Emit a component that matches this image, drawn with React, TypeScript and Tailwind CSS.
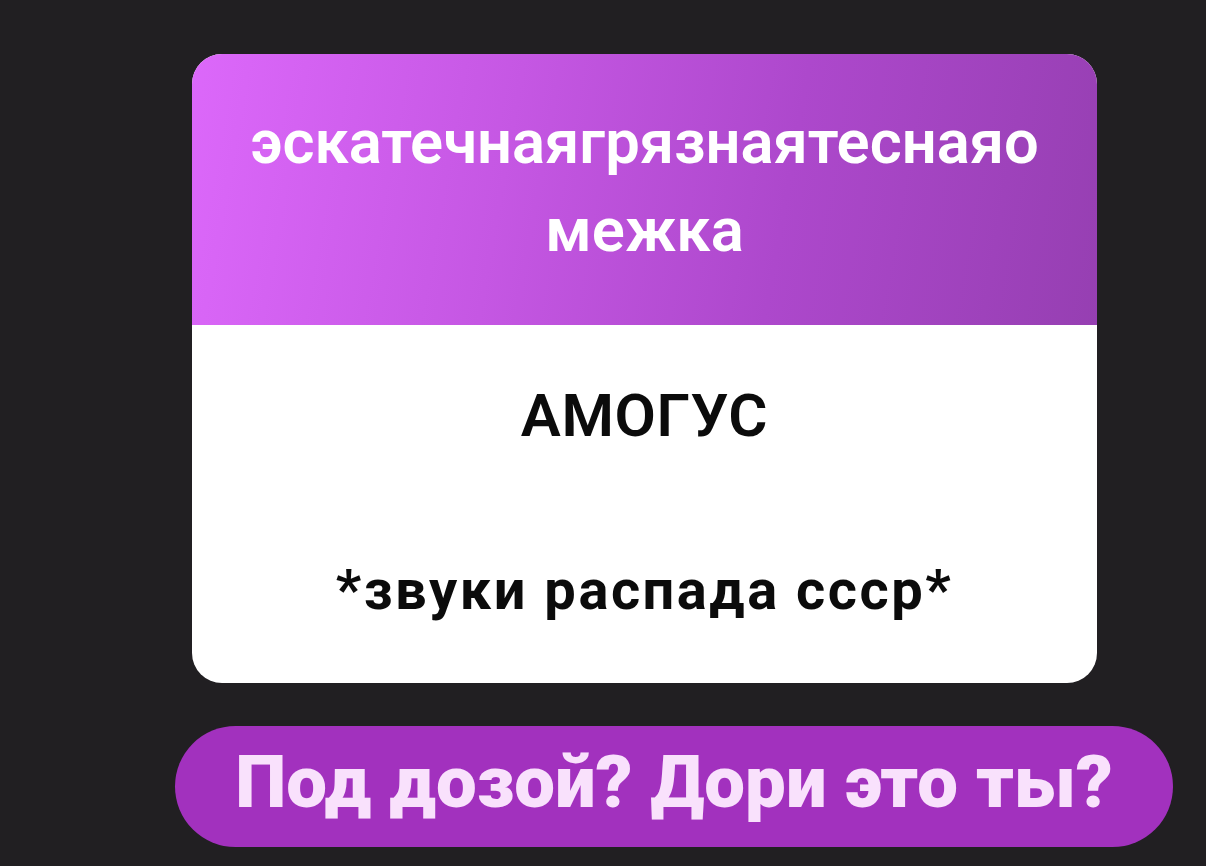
import React from "react";

const roboto = { fontFamily: "Roboto, 'Noto Sans', 'Liberation Sans', sans-serif" };

export default function App() {
  return (
    <div
      className="min-h-screen w-full bg-[#211f22] flex flex-col pt-[54px]"
      style={roboto}
    >
      {/* quiz card */}
      <div className="ml-[192px] w-[905px] rounded-[30px] overflow-hidden bg-white">
        <div className="h-[271px] flex items-center justify-center bg-[linear-gradient(100deg,#dc68fa_0%,#c557e3_35%,#ad48cc_65%,#963fb2_100%)]">
          <p className="w-[812px] text-center break-all text-white text-[61.5px] leading-[88px] font-semibold pb-[8px]">
            эскатечнаягрязнаятеснаяомежка
          </p>
        </div>
        <div className="h-[358px] flex flex-col items-center">
          <p className="mt-[58px] text-[60px] leading-[66px] font-semibold tracking-[0.01em] text-[#0b0b0b]">
            АМОГУС
          </p>
          <p className="mt-[110px] text-[56px] leading-[62px] font-bold tracking-[0.045em] text-[#0b0b0b]">
            *звуки распада ссср*
          </p>
        </div>
      </div>

      {/* answer button */}
      <button className="ml-[175px] mt-[43px] w-[998px] h-[121px] rounded-full bg-[#a231be] flex items-center justify-center">
        <span className="text-[72.5px] leading-none font-black text-[#f9e1fc] pb-[6px]">
          Под дозой? Дори это ты?
        </span>
      </button>
    </div>
  );
}
